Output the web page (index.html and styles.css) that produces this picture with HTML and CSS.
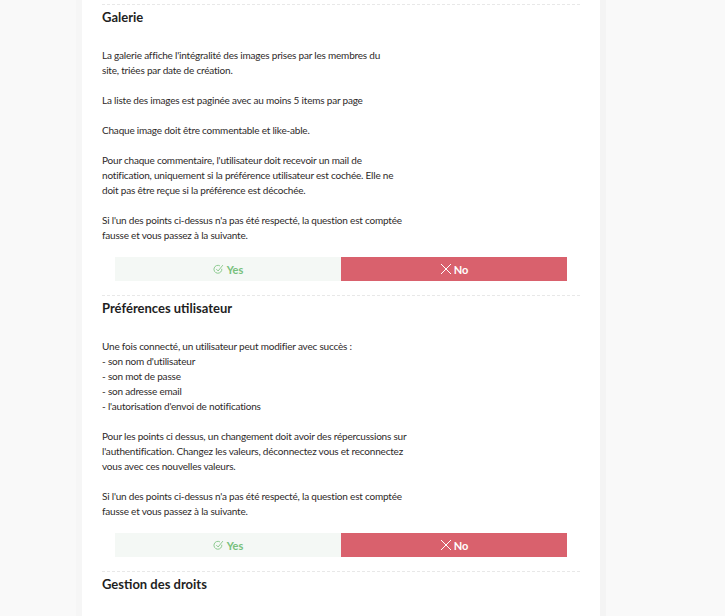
FILE: index.html
```html
<!DOCTYPE html>
<html lang="fr">
<head>
<meta charset="utf-8">
<title>Recette</title>
<link rel="stylesheet" href="styles.css">
</head>
<body>
<div class="page">
  <main class="card">
    <section class="item">
      <h2 class="item-title">Galerie</h2>
      <div class="item-desc">
        <p>La galerie affiche l'intégralité des images prises par les membres du<br>site, triées par date de création.</p>
        <p>La liste des images est paginée avec au moins 5 items par page</p>
        <p>Chaque image doit être commentable et like-able.</p>
        <p>Pour chaque commentaire, l'utilisateur doit recevoir un mail de<br>notification, uniquement si la préférence utilisateur est cochée. Elle ne<br>doit pas être reçue si la préférence est décochée.</p>
        <p>Si l'un des points ci-dessus n'a pas été respecté, la question est comptée<br>fausse et vous passez à la suivante.</p>
      </div>
      <div class="answers">
        <button class="answer answer-yes" type="button">
          <svg class="ico" viewBox="0 0 12 12" width="11" height="11"><path d="M9.6 5.2 A4.3 4.3 0 1 1 7.6 2.1" fill="none" stroke="currentColor" stroke-width="0.9"/><path d="M3.6 5.6 L5.6 7.6 L10.8 1.2" fill="none" stroke="currentColor" stroke-width="0.9"/></svg>
          <span>Yes</span>
        </button>
        <button class="answer answer-no" type="button">
          <svg class="ico ico-x" viewBox="0 0 12 12" width="12" height="12"><path d="M1 1 L11 11 M11 1 L1 11" fill="none" stroke="currentColor" stroke-width="1"/></svg>
          <span>No</span>
        </button>
      </div>
    </section>
    <section class="item">
      <h2 class="item-title">Préférences utilisateur</h2>
      <div class="item-desc">
        <p>Une fois connecté, un utilisateur peut modifier avec succès :<br>- son nom d'utilisateur<br>- son mot de passe<br>- son adresse email<br>- l'autorisation d'envoi de notifications</p>
        <p>Pour les points ci dessus, un changement doit avoir des répercussions sur<br>l'authentification. Changez les valeurs, déconnectez vous et reconnectez<br>vous avec ces nouvelles valeurs.</p>
        <p>Si l'un des points ci-dessus n'a pas été respecté, la question est comptée<br>fausse et vous passez à la suivante.</p>
      </div>
      <div class="answers">
        <button class="answer answer-yes" type="button">
          <svg class="ico" viewBox="0 0 12 12" width="11" height="11"><path d="M9.6 5.2 A4.3 4.3 0 1 1 7.6 2.1" fill="none" stroke="currentColor" stroke-width="0.9"/><path d="M3.6 5.6 L5.6 7.6 L10.8 1.2" fill="none" stroke="currentColor" stroke-width="0.9"/></svg>
          <span>Yes</span>
        </button>
        <button class="answer answer-no" type="button">
          <svg class="ico ico-x" viewBox="0 0 12 12" width="12" height="12"><path d="M1 1 L11 11 M11 1 L1 11" fill="none" stroke="currentColor" stroke-width="1"/></svg>
          <span>No</span>
        </button>
      </div>
    </section>
    <section class="item">
      <h2 class="item-title">Gestion des droits</h2>
    </section>
  </main>
</div>
</body>
</html>
```
FILE: styles.css
```css
* { box-sizing: border-box; }
html, body { margin: 0; padding: 0; }
body {
  background: #f9f9f9;
  font-family: Lato, "Open Sans", sans-serif;
  color: #2e2a2a;
  height: 616px;
  overflow: hidden;
}
.page {
  display: flex;
  padding-left: 82px;
}
.card {
  width: 524px;
  min-height: 616px;
  background: #fff;
  background-clip: padding-box;
  padding: 4px 20px 0 20px;
  border-right: 6px solid #f4f4f4;
  box-shadow: -6px 0 0 #f6f6f6;
}
.item {
  border-top: 1px dashed #e8e8e8;
  padding: 3px 0 14px;
}
.item-title {
  margin: 0;
  font-size: 13px;
  line-height: 18px;
  font-weight: 700;
  color: #1f1f1f;
}
.item-desc {
  margin-top: 22px;
  font-size: 10px;
  letter-spacing: -0.2px;
  line-height: 15px;
  white-space: nowrap;
}
.item-desc p { margin: 0 0 15px; }
.item-desc p:last-child { margin-bottom: 0; }
.answers {
  display: flex;
  margin: 14px 13px 0;
}
.answer {
  flex: 1;
  height: 24px;
  border: 0;
  display: flex;
  align-items: center;
  justify-content: center;
  gap: 3px;
  font-family: inherit;
  font-size: 11px;
  font-weight: 700;
  padding: 0;
}
.answer-yes {
  background: #f4f8f5;
  color: #78c17c;
}
.answer-no {
  background: #d9616d;
  color: #fff;
}
.ico { display: block; }
.ico-x { margin-right: -1px; }
```
